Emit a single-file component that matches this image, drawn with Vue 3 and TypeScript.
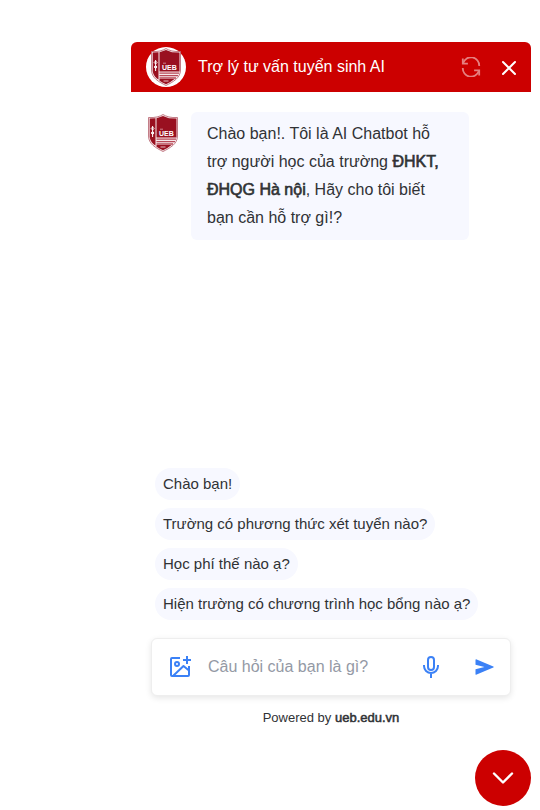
<script setup lang="ts">
import { ref } from 'vue'

const suggestions: string[] = [
  'Chào bạn!',
  'Trường có phương thức xét tuyển nào?',
  'Học phí thế nào ạ?',
  'Hiện trường có chương trình học bổng nào ạ?',
]

const question = ref('')
const open = ref(true)

function pick(text: string) {
  question.value = text
}

function reset() {
  question.value = ''
}
</script>

<template>
  <main class="page">
    <svg class="sprite" aria-hidden="true">
      <symbol id="crest" viewBox="0 0 30 38">
        <path d="M15 .5C18 2.5 23 4 29.5 3.5V22C29.5 30 22 34 15 37.5C8 34 .5 30 .5 22V3.5C7 4 12 2.5 15 .5Z" fill="#f7e9eb" stroke="#b5606c" stroke-width=".8" />
        <path d="M8.500 4.200L15 2L21 4.200L28.500 4.600V23.500H8.500Z" fill="#991020" />
        <path d="M1.700 4.600L7.500 4.200V31.500C4 29.500 1.700 26 1.700 22.500Z" fill="#991020" />
        <path d="M8.500 25.200H28M8.500 27.600H27M8.500 30H25" stroke="#b84a58" stroke-width="1.300" />
        <path d="M8.500 31H23.500Q20 34 15 36.300Q11 34.500 8.500 32.700Z" fill="#991020" />
        <path d="M4.600 12V23M3.200 14.500Q4.600 11.500 6 14.500Q4.600 17.500 3.200 14.500M3.200 19Q4.600 16 6 19Q4.600 22 3.200 19" fill="none" stroke="#fff" stroke-width="1" />
        <path d="M12.500 33H17.500" stroke="#e5bcc1" stroke-width="1" />
        <path d="M12 15.200H15" stroke="#d9a0a8" stroke-width=".8" />
      </symbol>
    </svg>

    <section v-show="open" class="chat" aria-label="Trợ lý tư vấn tuyển sinh AI">
      <header class="header">
        <span class="logo">
          <svg width="30" height="38" viewBox="0 0 30 38" aria-hidden="true">
            <use href="#crest" />
            <text x="11" y="22" class="crest-text">UEB</text>
          </svg>
        </span>
        <h1 class="title">Trợ lý tư vấn tuyển sinh AI</h1>
        <button class="icon-button refresh" type="button" aria-label="Làm mới" @click="reset">
          <svg width="20" height="20" viewBox="0 0 20 20" fill="none" stroke="currentColor" stroke-width="1.8">
            <path d="M2.200 6A8.200 8.200 0 0 1 18.200 9M17.800 14A8.200 8.200 0 0 1 1.800 11" />
            <path d="M1.800 1.500V6.600H6.900M18.200 18.500V13.400H13.100" />
          </svg>
        </button>
        <button class="icon-button" type="button" aria-label="Đóng" @click="open = false">
          <svg width="16" height="18" viewBox="0 0 16 18" fill="none" stroke="currentColor" stroke-width="2">
            <path d="M2 4L14 16M14 4L2 16" stroke-linecap="round" />
          </svg>
        </button>
      </header>

      <div class="messages">
        <svg class="avatar" width="30" height="38" viewBox="0 0 30 38" aria-hidden="true">
          <use href="#crest" />
          <text x="11" y="22" class="crest-text">UEB</text>
        </svg>
        <p class="bubble">
          Chào bạn!. Tôi là AI Chatbot hỗ trợ người học của trường <b>ĐHKT, ĐHQG Hà nội</b>, Hãy cho tôi biết bạn cần hỗ trợ gì!?
        </p>
      </div>

      <div class="suggestions">
        <button v-for="text in suggestions" :key="text" class="chip" type="button" @click="pick(text)">{{ text }}</button>
      </div>

      <form class="composer" @submit.prevent="reset">
        <button class="icon-button blue" type="button" aria-label="Thêm ảnh">
          <svg width="24" height="24" viewBox="0 0 24 24" fill="none" stroke="currentColor" stroke-width="2" stroke-linejoin="round">
            <path d="M12 3H4Q3 3 3 4V20Q3 21 4 21H20Q21 21 21 20V11" />
            <path d="M19 1V9M15 5H23" />
            <circle cx="9" cy="9" r="2" />
            <path d="M5 21L15.500 11L21 15.500" />
          </svg>
        </button>
        <input v-model="question" class="question" type="text" aria-label="Câu hỏi" placeholder="Câu hỏi của bạn là gì?" />
        <button class="icon-button blue" type="button" aria-label="Ghi âm">
          <svg width="24" height="24" viewBox="0 0 24 24" fill="none" stroke="currentColor" stroke-width="2">
            <rect x="9" y="2" width="6" height="13" rx="3" />
            <path d="M5 10V11A7 7 0 0 0 19 11V10M12 18V23" />
          </svg>
        </button>
        <button class="icon-button blue send" type="submit" aria-label="Gửi">
          <svg width="19" height="16" viewBox="0 0 19 16" fill="currentColor">
            <path d="M.5 1.100Q.5 -.1 1.700.400L18.300 7.400Q19.200 8 18.300 8.600L1.700 15.600Q.5 16.100 .5 14.900V10.200L9.500 8L.5 5.800Z" />
          </svg>
        </button>
      </form>

      <footer class="footer">Powered by <a href="https://ueb.edu.vn">ueb.edu.vn</a></footer>
    </section>

    <button class="toggle" type="button" aria-label="Thu gọn" @click="open = !open">
      <svg width="24" height="24" viewBox="0 0 24 24" fill="none" stroke="currentColor" stroke-width="2.400" stroke-linecap="round" stroke-linejoin="round">
        <path d="M3 7.500L12 16.500L21 7.500" />
      </svg>
    </button>
  </main>
</template>

<style>
body {
  background: #fff;
}
</style>

<style scoped>
.page {
  box-sizing: border-box;
  min-height: 100vh;
  padding: 42px 9px 4px;
  display: flex;
  flex-direction: column;
  align-items: flex-end;
  gap: 24px;
  color: #303235;
  font-family: "Liberation Sans", Arial, sans-serif;
  font-size: 16px;
}
.sprite {
  position: absolute;
  width: 0;
  height: 0;
}
.crest-text {
  font: bold 7px "Liberation Sans", Arial, sans-serif;
  fill: #fff;
}
.chat {
  width: 100%;
  max-width: 400px;
  flex: 1;
  display: flex;
  flex-direction: column;
}
button {
  font: inherit;
  color: inherit;
  border: 0;
  cursor: pointer;
}
svg {
  display: block;
}
.header {
  display: flex;
  align-items: center;
  height: 50px;
  padding: 0 14px 0 15px;
  border-radius: 6px 6px 0 0;
  background: #c00;
  color: #fff;
}
.logo {
  display: grid;
  place-items: center;
  width: 40px;
  height: 40px;
  border-radius: 50%;
  background: #fff;
}
.title {
  flex: 1;
  margin: 0 12px;
  font-size: 16px;
  font-weight: 400;
  line-height: 24px;
}
.icon-button {
  flex: none;
  padding: 0;
  background: none;
}
.refresh {
  margin-right: 20px;
  opacity: 0.5;
}
.messages {
  flex: 1;
  display: flex;
  align-items: flex-start;
  gap: 13px;
  padding: 20px 62px 20px 17px;
}
.avatar {
  flex: none;
  margin-top: 2px;
}
.bubble {
  flex: 1;
  margin: 0;
  padding: 8px 16px;
  border-radius: 6px;
  background: #f7f8ff;
  line-height: 28px;
}
b,
.footer a {
  font-weight: 400;
  -webkit-text-stroke: 0.04em currentColor;
}
.suggestions {
  display: flex;
  flex-direction: column;
  align-items: flex-start;
  gap: 8px;
  padding: 0 24px 18px;
}
.chip {
  padding: 6px 8px;
  border-radius: 16px;
  background: #f7f8ff;
  font-size: 15px;
  line-height: 20px;
  text-align: left;
}
.composer {
  display: flex;
  align-items: center;
  margin: 0 20px;
  padding: 16px;
  border: 1px solid #eee;
  border-radius: 6px;
  background: #fff;
  box-shadow: 0 2px 6px rgba(0, 0, 0, 0.1);
}
.question {
  flex: 1;
  min-width: 0;
  margin: 0 12px 0 16px;
  padding: 0;
  border: 0;
  outline: 0;
  background: none;
  font: inherit;
  line-height: 24px;
  color: inherit;
}
.question::placeholder {
  color: #9499a5;
  opacity: 1;
}
.blue {
  color: #3b81f6;
}
.send {
  margin-left: 32px;
}
.footer {
  padding-top: 14px;
  font-size: 13px;
  line-height: 16px;
  text-align: center;
}
.footer a {
  color: inherit;
  text-decoration: none;
}
.toggle {
  display: grid;
  place-items: center;
  width: 56px;
  height: 56px;
  padding: 0;
  border-radius: 50%;
  background: #c00;
  color: #fff;
}
</style>
